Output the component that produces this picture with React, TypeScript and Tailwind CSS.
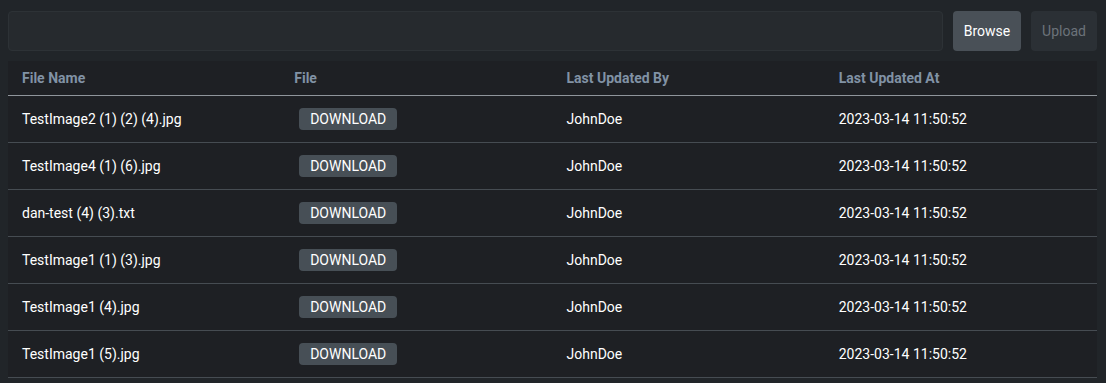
import React from 'react';

const rows = [
  'TestImage2 (1) (2) (4).jpg',
  'TestImage4 (1) (6).jpg',
  'dan-test (4) (3).txt',
  'TestImage1 (1) (3).jpg',
  'TestImage1 (4).jpg',
  'TestImage1 (5).jpg',
];

const App: React.FC = () => {
  return (
    <div
      className="min-h-screen bg-[#212529] pt-[11px] pl-[8px] pr-[9px] text-[14px] text-white"
      style={{ fontFamily: 'Roboto, "Liberation Sans", sans-serif' }}
    >
      {/* upload bar */}
      <div className="flex h-[40px]">
        <div className="flex-1 rounded-[4px] border border-[#2d3236] bg-[#262a2e]"></div>
        <button className="ml-[10px] w-[68px] rounded-[4px] bg-[#495057] text-white">Browse</button>
        <button className="ml-[10px] w-[66px] rounded-[4px] bg-[#2b3035] text-[#6c737a]">Upload</button>
      </div>

      {/* files table */}
      <div className="mt-[10px] bg-[#1e2024]">
        <div className="grid h-[35px] grid-cols-4 items-center border-b border-[#8f959b] font-bold text-[#8192a5]">
          <div className="px-[14px]">File Name</div>
          <div className="px-[14px]">File</div>
          <div className="px-[14px]">Last Updated By</div>
          <div className="px-[14px]">Last Updated At</div>
        </div>
        {rows.map((name) => (
          <div key={name} className="grid h-[47px] grid-cols-4 items-center border-b border-[#464c52]">
            <div className="px-[14px]">{name}</div>
            <div className="px-[14px]">
              <span className="ml-[5px] inline-flex h-[22px] w-[98px] items-center justify-center rounded-[4px] bg-[#474f56] text-[14px]">
                DOWNLOAD
              </span>
            </div>
            <div className="px-[14px]">JohnDoe</div>
            <div className="px-[14px]">2023-03-14 11:50:52</div>
          </div>
        ))}
      </div>
    </div>
  );
};

export default App;
